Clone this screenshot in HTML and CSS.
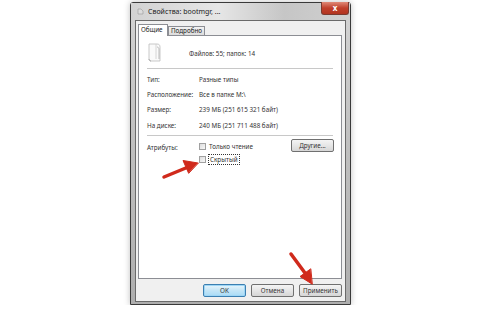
FILE: index.html
```html
<!DOCTYPE html>
<html lang="ru">
  <head>
    <meta charset="UTF-8" />
    <title>Свойства: bootmgr, ...</title>
    <link rel="stylesheet" href="styles.css">
  </head>
  <body>
    <div class="window">
      <div class="titlebar">
        <svg class="title-icon" width="7" height="7" viewBox="0 0 7 7">
          <path d="M1 1h3l2 2v3H1z" fill="#ddd" stroke="#999" stroke-width="0.6"/>
        </svg>
        <span class="title">Свойства: bootmgr, ...</span>
        <div class="close">x</div>
      </div>
      <div class="client">
        <div class="tabs">
          <div class="tab active">Общие</div>
          <div class="tab">Подробно</div>
        </div>
        <div class="panel">
          <div class="head">
            <svg class="doc-icon" width="16" height="20" viewBox="0 0 16 20">
              <path d="M2 1h8c2 0 3 1 3 3v14H4c-1.5 0-2-1-2-2z" fill="#fafafa" stroke="#bbb" stroke-width="0.8"/>
              <path d="M9 1v15" stroke="#ccc" stroke-width="0.8"/>
              <path d="M10 4c1 0 2 1 2 2v10" stroke="#aaa" stroke-width="0.8" fill="none"/>
              <path d="M2 16c0 1 1 2 2 2" stroke="#999" stroke-width="0.8" fill="none"/>
            </svg>
            <span>Файлов: 55; папок: 14</span>
          </div>
          <hr class="sep">
          <div class="rows">
            <div class="row"><span class="label">Тип:</span><span>Разные типы</span></div>
            <div class="row"><span class="label">Расположение:</span><span>Все в папке M:\</span></div>
            <div class="row"><span class="label">Размер:</span><span>239 МБ (251 615 321 байт)</span></div>
            <div class="row"><span class="label">На диске:</span><span>240 МБ (251 711 488 байт)</span></div>
          </div>
          <hr class="sep">
          <div class="attrs">
            <span class="label">Атрибуты:</span>
            <div class="checks">
              <label class="check"><span class="box"></span>Только чтение</label>
              <label class="check"><span class="box"></span><span class="focus">Скрытый</span></label>
            </div>
            <button class="btn other">Другие...</button>
          </div>
        </div>
        <div class="buttons">
          <button class="btn default">OK</button>
          <button class="btn">Отмена</button>
          <button class="btn">Применить</button>
        </div>
      </div>
    </div>
    <svg class="arrows" width="480" height="309" viewBox="0 0 480 309">
      <g stroke="#d02a1c" stroke-width="3.5" stroke-linecap="round" fill="#d02a1c">
        <path d="M164 177L187 167.5" fill="none"/>
        <path d="M198 163L183 160.5L188.5 173z" stroke-width="1" stroke-linejoin="round"/>
        <path d="M291 254L305 273" fill="none"/>
        <path d="M312 284L300 276.5L310.5 269z" stroke-width="1" stroke-linejoin="round"/>
      </g>
    </svg>
  </body>
</html>
```

FILE: styles.css
```css
* {
  box-sizing: border-box;
}

body {
  margin: 0;
  background: #fff;
  font-family: "Noto Sans", "Liberation Sans", sans-serif;
  font-size: 6.3px;
  color: #333;
}

.window {
  margin: 2px 0 0 130px;
  width: 221px;
  height: 303px;
  border: 1px solid #3a3a3a;
  border-radius: 3px 3px 0 0;
  background: linear-gradient(#d4d4d4, #c2c2c2 40%, #aeaeae);
  box-shadow: 0 0 6px rgba(0, 0, 0, 0.25);
  display: flex;
  flex-direction: column;
  position: relative;
}

.titlebar {
  height: 17px;
  flex: none;
  display: flex;
  align-items: center;
  padding-left: 6px;
  background: linear-gradient(90deg, #d2d2d2, #e6e6e6 40%, #c6c6c6 70%, #d0d0d0);
}

.title-icon {
  margin-right: 4px;
}

.title {
  font-size: 7px;
  color: #222;
}

.close {
  position: absolute;
  top: -1px;
  right: 1px;
  width: 28px;
  height: 13px;
  border: 1px solid #7a3a30;
  border-top: none;
  border-radius: 0 0 3px 3px;
  background: linear-gradient(#e08a78, #c0402c 50%, #b23420);
  color: #fff;
  font-size: 8px;
  font-weight: bold;
  text-align: center;
  line-height: 11px;
}

.client {
  flex: 1;
  margin: 0 4px 3px 4px;
  border: 1px solid #6a6a6a;
  background: #f0f0f0;
  padding: 3px 3px 4px 2px;
  display: flex;
  flex-direction: column;
}

.tabs {
  display: flex;
  align-items: flex-end;
  height: 11px;
  flex: none;
}

.tab {
  height: 9px;
  padding: 0 2px;
  border: 1px solid #8c8e94;
  border-bottom: none;
  background: linear-gradient(#f2f2f2, #dcdcdc);
  line-height: 8px;
  color: #222;
}

.tab.active {
  height: 12px;
  width: 30px;
  background: #fff;
  position: relative;
  top: 1px;
  line-height: 10px;
}

.panel {
  height: 244px;
  flex: none;
  border: 1px solid #8c8e94;
  background: #fff;
  padding: 0 7px 0 8px;
}

.head {
  display: flex;
  align-items: center;
  height: 32px;
  padding-top: 2px;
}

.doc-icon {
  margin-right: 26px;
}

.sep {
  margin: 0;
  border: none;
  border-top: 1px solid #c8c8c8;
  height: 0;
  width: 186px;
}

.rows {
  padding: 3px 0 2px;
}

.row {
  display: flex;
  height: 15.2px;
  align-items: center;
}

.label {
  width: 52px;
  flex: none;
}

.attrs {
  display: flex;
  align-items: flex-start;
  padding-top: 7px;
}

.checks {
  flex: 1;
  display: flex;
  flex-direction: column;
  gap: 5px;
}

.check {
  display: flex;
  align-items: center;
  height: 8px;
}

.box {
  width: 7px;
  height: 7px;
  border: 1px solid #a0a0a0;
  background: linear-gradient(135deg, #ddd, #f8f8f8);
  margin-right: 3px;
}

.focus {
  border: 1px dotted #333;
  padding: 0 1px;
  margin-left: -1px;
}

.btn {
  width: 43px;
  height: 13px;
  padding: 0;
  border: 1px solid #707070;
  border-radius: 2px;
  background: linear-gradient(#f4f4f4, #e6e6e6 50%, #d6d6d6);
  font-family: inherit;
  font-size: 6.3px;
  color: #333;
}

.other {
  margin-top: -4px;
}

.buttons {
  display: flex;
  justify-content: flex-end;
  gap: 5px;
  margin-top: 5px;
}

.btn.default {
  border-color: #3c7fb1;
  background: linear-gradient(#e8f5fc, #c4e5f6 50%, #a9dbf6);
  box-shadow: inset 0 0 0 1px #9ed6f5;
}

.arrows {
  position: absolute;
  top: 0;
  left: 0;
  pointer-events: none;
}
```
